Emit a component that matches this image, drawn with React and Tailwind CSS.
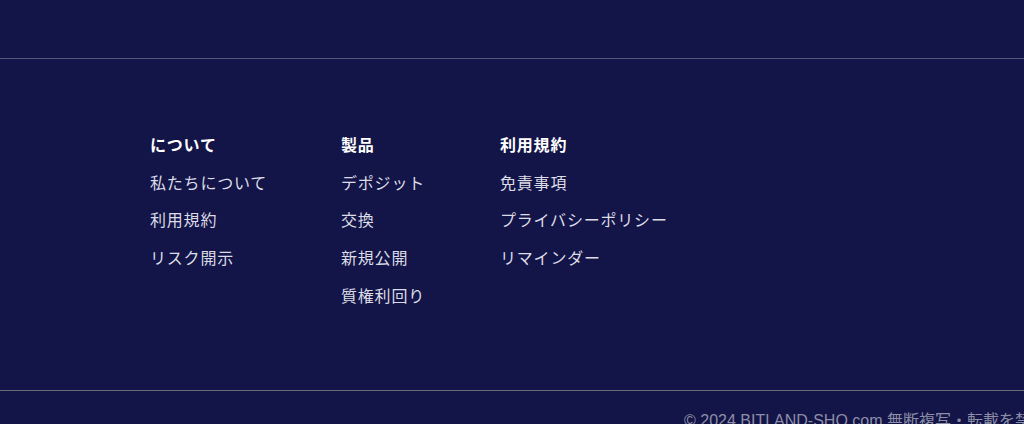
const columns = [
  { title: 'について', width: 'w-[191px]', items: ['私たちについて', '利用規約', 'リスク開示'] },
  { title: '製品', width: 'w-[159px]', items: ['デポジット', '交換', '新規公開', '質権利回り'] },
  { title: '利用規約', width: 'w-[200px]', items: ['免責事項', 'プライバシーポリシー', 'リマインダー'] },
];

const font = { fontFamily: '"Noto Sans CJK JP", "Noto Sans", sans-serif' };

export default function App() {
  return (
    <div className="w-[1024px] h-[424px] overflow-hidden bg-[#131447]" style={font}>
      <div className="h-[58px]" />
      <div className="border-t border-[#55577a] pt-[66px] pb-[76px] pl-[150px] flex">
        {columns.map((col) => (
          <div key={col.title} className={`${col.width} flex flex-col`}>
            <div className="h-[37.75px] flex items-center text-[16px] font-bold tracking-[0.05em] text-white">
              {col.title}
            </div>
            {col.items.map((item) => (
              <a
                key={item}
                href="#"
                className="h-[37.75px] flex items-center text-[16px] tracking-[0.05em] text-[#dcdce6] whitespace-nowrap"
              >
                {item}
              </a>
            ))}
          </div>
        ))}
      </div>
      <div className="border-t border-[#6a6c78] pt-[19px] pl-[684px] whitespace-nowrap">
        <p className="text-[16px] leading-[22px] text-[#8d8ea6]" style={{ fontFamily: '"Liberation Sans", "Noto Sans CJK JP", sans-serif' }}>
          © 2024 BITLAND-SHO.com 無断複写・転載を禁止します。
        </p>
      </div>
    </div>
  );
}
